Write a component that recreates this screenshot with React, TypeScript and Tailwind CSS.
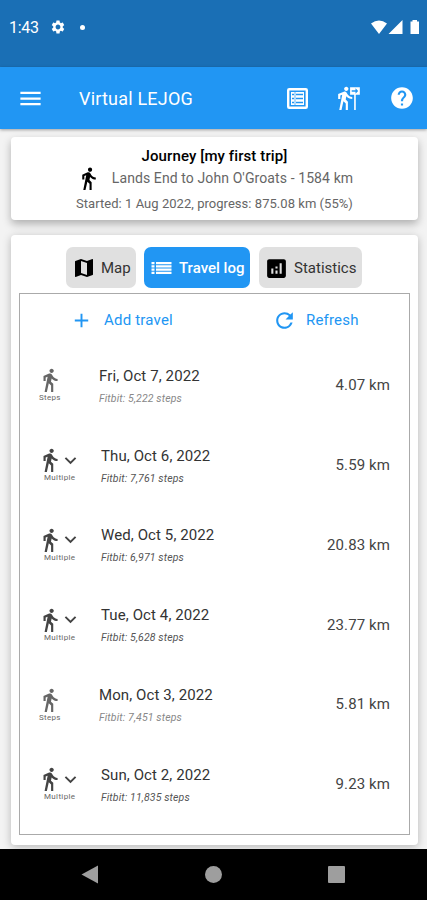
import { type ReactNode } from 'react';
import clsx from 'clsx';
import {
  MdAdd,
  MdAnalytics,
  MdDirectionsWalk,
  MdExpandMore,
  MdFollowTheSigns,
  MdHelp,
  MdMap,
  MdMenu,
  MdRefresh,
  MdSettings,
} from 'react-icons/md';

interface Travel {
  date: string;
  steps: string;
  distance: string;
  multiple?: boolean;
}

const travels: Travel[] = [
  { date: 'Fri, Oct 7, 2022', steps: '5,222', distance: '4.07' },
  { date: 'Thu, Oct 6, 2022', steps: '7,761', distance: '5.59', multiple: true },
  { date: 'Wed, Oct 5, 2022', steps: '6,971', distance: '20.83', multiple: true },
  { date: 'Tue, Oct 4, 2022', steps: '5,628', distance: '23.77', multiple: true },
  { date: 'Mon, Oct 3, 2022', steps: '7,451', distance: '5.81' },
  { date: 'Sun, Oct 2, 2022', steps: '11,835', distance: '9.23', multiple: true },
];

function TableIcon() {
  return (
    <svg viewBox="0 0 21 21" className="size-[21px]" fill="none" stroke="currentColor">
      <rect x="1.200" y="1.200" width="18.600" height="18.600" rx="1" strokeWidth="2.400" />
      <path d="M4 4h13v13H4z" fill="currentColor" stroke="none" />
      <path d="M5 6.500h2M9 6.500h7M5 10.500h2M9 10.500h7M5 14.500h2M9 14.500h7" stroke="#2196f3" strokeWidth="1.400" />
      <path d="M3.500 3.500h14v14h-14zM8 4v13" stroke="#2196f3" strokeWidth="0.700" />
    </svg>
  );
}

function LogIcon() {
  return (
    <svg viewBox="0 0 20 12" className="h-3 w-[21px] shrink-0" fill="currentColor">
      <path d="M0 0h3v2.200H0zM0 3.300h3v2.200H0zM0 6.600h3v2.200H0zM0 9.800h3v2.200H0zM4.500 0H20v2.200H4.500zM4.500 3.300H20v2.200H4.500zM4.500 6.600H20v2.200H4.500zM4.500 9.800H20v2.200H4.500z" />
    </svg>
  );
}

function StatusBar() {
  return (
    <div className="flex h-[67px] items-start bg-[#1a6fb5] pt-[17px] pr-[7px] pl-[9px] text-white">
      <span className="w-[42px] text-base leading-[22px] tracking-[-0.3px]">1:43</span>
      <MdSettings className="mt-[2px] -ml-px size-4" />
      <span className="mt-[8px] ml-[14px] size-[5px] rounded-full bg-white" />
      <svg viewBox="0 0 50 15" className="mt-[3px] ml-auto h-[15px] w-[50px]" fill="currentColor">
        <path d="M1 3.500Q9 -2.500 17 3.500L9 14zM32.500 0v14h-14zM40.500 1.500h2V0h4.500v1.500h2V14h-8.500V1.500z" />
      </svg>
    </div>
  );
}

function AppBar() {
  return (
    <header className="relative flex h-[62px] items-center bg-[#2196f3] pr-[12px] pl-[17px] text-white shadow-[0_1px_3px_rgba(0,0,0,0.35)]">
      <MdMenu className="size-[27px]" />
      <h1 className="ml-[35px] text-[18px] tracking-[0.2px]">Virtual LEJOG</h1>
      <div className="ml-auto flex items-center">
        <TableIcon />
        <MdFollowTheSigns className="ml-[28px] size-[26px]" />
        <MdHelp className="ml-[27px] size-[26px]" />
      </div>
    </header>
  );
}

function JourneyCard() {
  return (
    <section className="mt-2 flex h-[83px] flex-col items-center rounded bg-white pt-[8px] shadow-[0_4px_8px_rgba(0,0,0,0.28)]">
      <h2 className="text-[15px] leading-[22px] font-medium tracking-[0.1px] text-black">Journey [my first trip]</h2>
      <div className="flex h-[22px] items-center text-[#666]">
        <MdDirectionsWalk className="mr-[11px] size-[25px] text-black" />
        <span className="text-sm tracking-[0.1px]">Lands End to John O'Groats - 1584 km</span>
      </div>
      <p className="mt-[5px] text-[13px] leading-5 tracking-[0.04px] text-[#666]">
        Started: 1 Aug 2022, progress: 875.08 km (55%)
      </p>
    </section>
  );
}

interface TabProps {
  icon: ReactNode;
  label: string;
  className: string;
  active?: boolean;
}

function Tab({ icon, label, className, active }: TabProps) {
  return (
    <button
      className={clsx(
        'flex h-[41px] items-center rounded-[7px] px-[7px] pt-px text-[15px] whitespace-nowrap',
        active ? 'gap-[7px] bg-[#2196f3] font-medium text-white' : 'gap-[5px] bg-[#e0e0e0] text-[#333]',
        className,
      )}
    >
      {icon}
      {label}
    </button>
  );
}

function TravelRow({ date, steps, distance, multiple }: Travel) {
  return (
    <li className="flex h-[79.8px] items-center pr-[19px] pl-[17px]">
      <div className={clsx('flex shrink-0 flex-col text-[#666]', multiple ? 'w-[64px]' : 'w-[62px]')}>
        <div className="flex h-[26px] items-center">
          <MdDirectionsWalk className={clsx('size-[26px] shrink-0', multiple && 'text-[#444]')} />
          {multiple && <MdExpandMore className="-ml-[4px] size-[23px] shrink-0 text-[#444]" />}
        </div>
        <span
          className={clsx(
            'text-[8px] leading-[9px]',
            multiple ? 'ml-[7px] tracking-[0.35px]' : 'ml-[2px] tracking-[0.3px]',
          )}
        >
          {multiple ? 'Multiple' : 'Steps'}
        </span>
      </div>
      <div className="flex-1 pt-[3px]">
        <p className="text-[15px] leading-5 tracking-[0.1px] text-[#333]">{date}</p>
        <p
          className={clsx(
            'mt-[5px] text-[10.5px] leading-4 tracking-[0.13px] italic',
            multiple ? 'text-[#555]' : 'text-[#888]',
          )}
        >
          Fitbit: {steps} steps
        </p>
      </div>
      <span className="pt-px text-[15px] tracking-[0.1px] text-[#444]">{distance} km</span>
    </li>
  );
}

function NavigationBar() {
  return (
    <nav className="flex h-[51px] items-center justify-between bg-black pr-[82px] pl-[81px] text-[#9e9e9e]">
      <svg viewBox="0 0 17 19" className="h-[19px] w-[17px]" fill="currentColor">
        <path d="M17 .5v18L.5 9.500z" />
      </svg>
      <span className="ml-px size-[17px] rounded-full bg-[#9e9e9e]" />
      <span className="size-[17px] rounded-[1px] bg-[#9e9e9e]" />
    </nav>
  );
}

export default function App() {
  return (
    <div className="flex h-[900px] w-[427px] flex-col overflow-hidden bg-[#f3f3f3] font-['Roboto',sans-serif]">
      <StatusBar />
      <AppBar />
      <main className="flex-1 pr-[9px] pl-[11px]">
        <JourneyCard />
        <section className="mt-[15px] h-[610px] rounded bg-white px-2 pt-3 shadow-[0_2px_8px_rgba(0,0,0,0.25)]">
          <div className="ml-[47px] flex">
            <Tab icon={<MdMap className="-ml-px size-[24px] shrink-0 text-black" />} label="Map" className="w-[70px]" />
            <Tab icon={<LogIcon />} label="Travel log" className="ml-2 w-[106px]" active />
            <Tab
              icon={<MdAnalytics className="-ml-[2px] size-[25px] shrink-0 text-black" />}
              label="Statistics"
              className="ml-[9px] w-[103px]"
            />
          </div>
          <div className="mt-[5px] h-[542px] border border-[#aaa]">
            <div className="flex h-[51px] items-center pt-px text-[15px] text-[#2196f3]">
              <button className="ml-[50px] flex items-center gap-[11px] tracking-[0.2px]">
                <MdAdd className="size-[23px]" />
                Add travel
              </button>
              <button className="ml-[99px] flex items-center gap-[9px] tracking-[0.2px]">
                <MdRefresh className="size-[25px]" />
                Refresh
              </button>
            </div>
            <ul>
              {travels.map((travel) => (
                <TravelRow key={travel.date} {...travel} />
              ))}
            </ul>
          </div>
        </section>
      </main>
      <NavigationBar />
    </div>
  );
}
